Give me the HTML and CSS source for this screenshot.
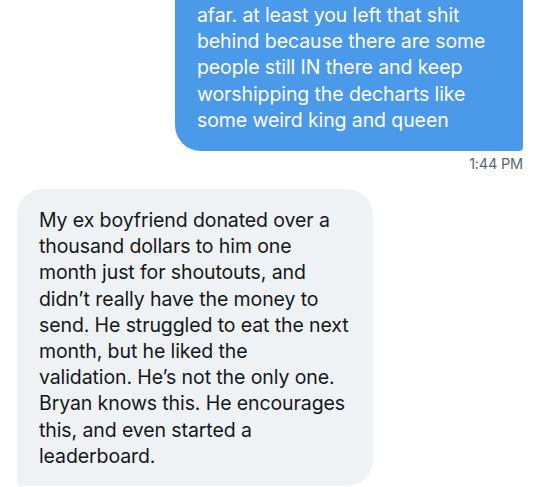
FILE: index.html
```html
<!DOCTYPE html>
<html lang="en">
<head>
    <meta charset="UTF-8">
    <meta name="viewport" content="width=device-width, initial-scale=1.0">
    <title>Messages</title>
    <link rel="stylesheet" href="styles.css">
</head>
<body>
    <div class="conversation">
        <div class="message sent">
            <div class="bubble">
                afar. at least you left that shit<br>
                behind because there are some<br>
                people still IN there and keep<br>
                worshipping the decharts like<br>
                some weird king and queen
            </div>
            <div class="time">1:44 PM</div>
        </div>

        <div class="message received">
            <div class="bubble">
                My ex boyfriend donated over a<br>
                thousand dollars to him one<br>
                month just for shoutouts, and<br>
                didn’t really have the money to<br>
                send. He struggled to eat the next<br>
                month, but he liked the<br>
                validation. He’s not the only one.<br>
                Bryan knows this. He encourages<br>
                this, and even started a<br>
                leaderboard.
            </div>
        </div>
    </div>
</body>
</html>
```

FILE: styles.css
```css
body {
    font-family: Inter, "Noto Sans", Arial, sans-serif;
    margin: 0;
    padding: 0;
    background-color: #fff;
}
.conversation {
    display: flex;
    flex-direction: column;
    padding: 0 17px 0 17px;
}
.message {
    display: flex;
    flex-direction: column;
}
.bubble {
    font-size: 19.5px;
    line-height: 26.2px;
    letter-spacing: -0.1px;
    box-sizing: border-box;
}
.sent {
    align-items: flex-end;
}
.sent .bubble {
    width: 348px;
    padding: 2px 20px 18px 22px;
    background-color: #4b99e9;
    color: #fff;
    border-radius: 0 0 4px 26px;
}
.time {
    margin-top: 4px;
    font-size: 14.5px;
    color: #5b6670;
    letter-spacing: -0.2px;
}
.received {
    margin-top: 17px;
    align-items: flex-start;
}
.received .bubble {
    width: 356px;
    padding: 18px 18px 17px 22px;
    background-color: #eff2f4;
    color: #14171a;
    border-radius: 26px 26px 26px 4px;
}
```
